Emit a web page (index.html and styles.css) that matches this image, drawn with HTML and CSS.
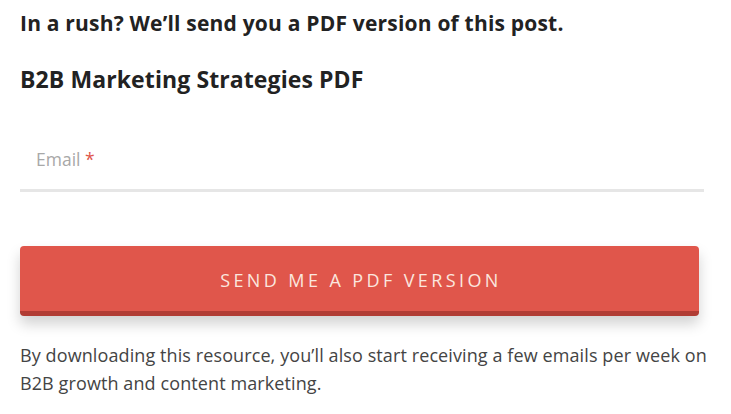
FILE: index.html
```html
<!DOCTYPE html>
<html>
<head>
<meta charset="utf-8">
<link rel="stylesheet" href="styles.css">
</head>
<body>
<div class="wrap">
  <h3 class="lead">In a rush? We’ll send you a PDF version of this post.</h3>
  <h2 class="title">B2B Marketing Strategies PDF</h2>
  <form class="form">
    <label class="field">
      <span class="label">Email <span class="req">*</span></span>
    </label>
    <button type="button" class="btn">SEND ME A PDF VERSION</button>
  </form>
  <p class="note">By downloading this resource, you’ll also start receiving a few emails per week on B2B growth and content marketing.</p>
</div>
</body>
</html>
```
FILE: styles.css
```css
html, body {
  margin: 0;
  padding: 0;
  background: #fff;
}
.wrap {
  padding: 8px 20px 0 20px;
  font-family: "Open Sans", "Noto Sans", sans-serif;
  color: #222;
}
.lead {
  margin: 0;
  font-size: 21px;
  line-height: 30px;
  font-weight: 700;
  letter-spacing: 0.2px;
  color: #222;
}
.title {
  margin: 26px 0 0;
  font-size: 23px;
  line-height: 30px;
  font-weight: 700;
  letter-spacing: 0.1px;
  color: #222;
}
.form {
  display: flex;
  flex-direction: column;
}
.field {
  display: block;
  margin-top: 38px;
  width: 684px;
  height: 57px;
  border-bottom: 3px solid #e6e6e6;
  box-sizing: content-box;
}
.label {
  display: block;
  padding: 16px 0 0 16px;
  font-size: 17.5px;
  line-height: 22px;
  color: #a8a8a8;
}
.req {
  color: #e0564b;
}
.btn {
  margin-top: 54px;
  width: 679px;
  height: 70px;
  border: none;
  border-bottom: 5px solid #b13c34;
  border-radius: 4px;
  background: #e0564b;
  color: #fbe6df;
  font-family: "Open Sans", "Noto Sans", sans-serif;
  font-size: 18px;
  letter-spacing: 3.4px;
  font-weight: 400;
  box-shadow: 0 8px 14px rgba(0, 0, 0, 0.18);
  padding: 2px 0 0 3px;
  cursor: pointer;
}
.note {
  margin: 26px 0 0;
  font-size: 18px;
  line-height: 27.5px;
  letter-spacing: 0.1px;
  color: #444;
}
```
